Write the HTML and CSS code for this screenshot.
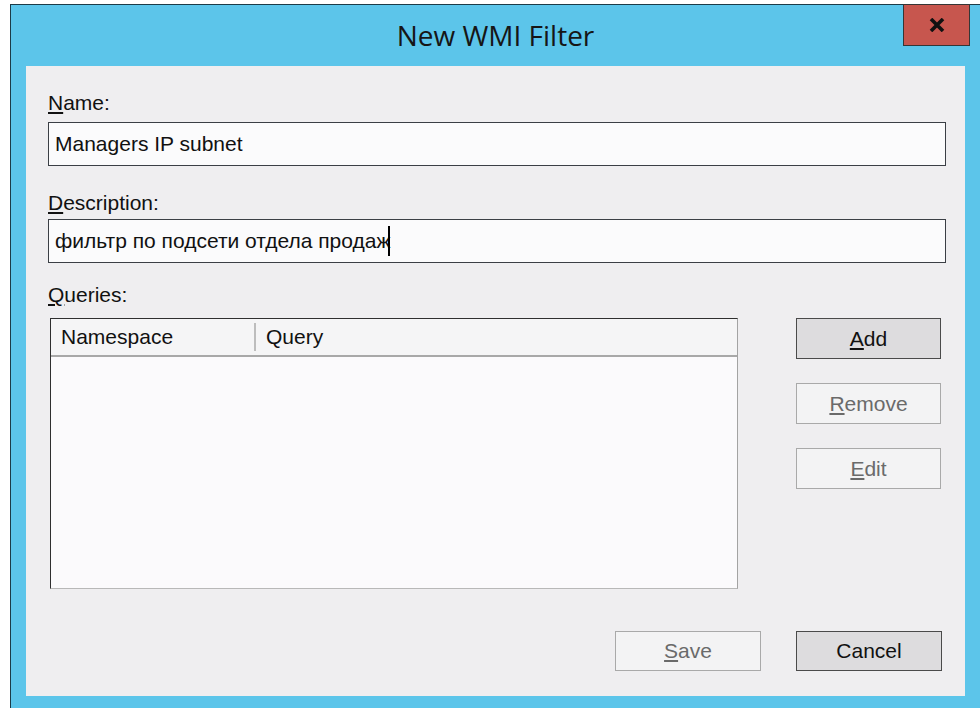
FILE: index.html
```html
<!DOCTYPE html>
<html lang="en">
<head>
<meta charset="utf-8">
<title>New WMI Filter</title>
<link rel="stylesheet" href="styles.css">
</head>
<body>
  <div class="window">
    <div class="titlebar">
      <span class="title">New WMI Filter</span>
      <button class="close" title="Close">
        <svg width="16" height="14" viewBox="0 0 16 14"><path d="M2 1 L14 13 M14 1 L2 13" stroke="#111" stroke-width="3.6" fill="none"/></svg>
      </button>
    </div>
    <div class="client">
      <label class="field-label name-label"><u>N</u>ame:</label>
      <div class="textbox">Managers IP subnet</div>
      <label class="field-label desc-label"><u>D</u>escription:</label>
      <div class="textbox">фильтр по подсети отдела продаж<span class="caret"></span></div>
      <label class="field-label queries-label"><u>Q</u>ueries:</label>
      <div class="queries">
        <div class="list">
          <div class="list-head">
            <span class="col col-ns">Namespace</span>
            <span class="col col-query">Query</span>
          </div>
          <div class="list-body"></div>
        </div>
        <div class="side-buttons">
          <button class="btn default"><u>A</u>dd</button>
          <button class="btn disabled"><u>R</u>emove</button>
          <button class="btn disabled"><u>E</u>dit</button>
        </div>
      </div>
      <div class="footer">
        <button class="btn disabled wide"><u>S</u>ave</button>
        <button class="btn default wide">Cancel</button>
      </div>
    </div>
  </div>
</body>
</html>
```
FILE: styles.css
```css
* { box-sizing: border-box; }
body {
	margin: 0;
	background: #fff;
	font: 21px/24px "Liberation Sans", Arial, sans-serif;
	color: #111;
	overflow: hidden;
}
u { text-decoration: underline; text-underline-offset: 2px; }

.window {
	position: relative;
	margin: 4px 0 0 10px;
	width: 970px;
	height: 704px;
	background: #5cc5ea;
	border-top: 1px solid #1c3b48;
	border-left: 1px solid #1c3b48;
	display: flex;
	flex-direction: column;
}
.titlebar {
	height: 61px;
	display: flex;
	align-items: center;
	justify-content: center;
}
.title {
	font: 28px/32px "Open Sans", "Noto Sans", sans-serif;
	color: #161616;
	margin-top: -2px;
}
.close {
	position: absolute;
	top: -1px;
	right: 10px;
	width: 67px;
	height: 42px;
	background: #c7564e;
	border: 1px solid #363636;
	padding: 0;
	display: flex;
	align-items: center;
	justify-content: center;
}

.client {
	margin: 0 15px 0 15px;
	height: 630px;
	background: #efeef0;
	padding: 25px 19px 0 22px;
}
.field-label { display: block; }
.name-label { margin-bottom: 7px; }
.desc-label { margin: 25px 0 4px; }
.queries-label { margin: 20px 0 11px; }

.textbox {
	height: 44px;
	background: #fbfbfc;
	border: 1px solid #3b3f45;
	padding: 0 6px;
	display: flex;
	align-items: center;
	white-space: nowrap;
}
.caret {
	display: inline-block;
	width: 2px;
	height: 30px;
	background: #000;
	margin-left: -2px;
}

.queries { display: flex; }
.list {
	margin-left: 2px;
	width: 688px;
	height: 271px;
	border-top: 1px solid #2f2f2f;
	border-left: 1px solid #2f2f2f;
	border-right: 1px solid #a3a3a3;
	border-bottom: 1px solid #b8b8b8;
	background: #fbfafc;
	display: flex;
	flex-direction: column;
}
.list-head {
	height: 38px;
	background: #f5f5f6;
	border-bottom: 2px solid #a8a8a8;
	display: flex;
	align-items: center;
}
.col { padding-left: 10px; }
.col-ns {
	width: 205px;
	border-right: 2px solid #bdbdbd;
	line-height: 28px;
}
.col-query { padding-left: 10px; }
.list-body { flex: 1; }

.side-buttons {
	margin-left: 58px;
	display: flex;
	flex-direction: column;
	gap: 24px;
}
.btn {
	width: 145px;
	height: 41px;
	font: 21px/24px "Liberation Sans", Arial, sans-serif;
	padding: 0;
	color: #111;
}
.btn.default {
	background: #dddcde;
	border: 1px solid #4a4a4a;
}
.btn.disabled {
	background: #f3f3f4;
	border: 1px solid #a9a9a9;
	color: #6a6a6a;
}
.btn.wide { width: 146px; height: 40px; }

.footer {
	margin-top: 42px;
	display: flex;
	justify-content: flex-end;
	gap: 35px;
	padding-right: 4px;
}
```
